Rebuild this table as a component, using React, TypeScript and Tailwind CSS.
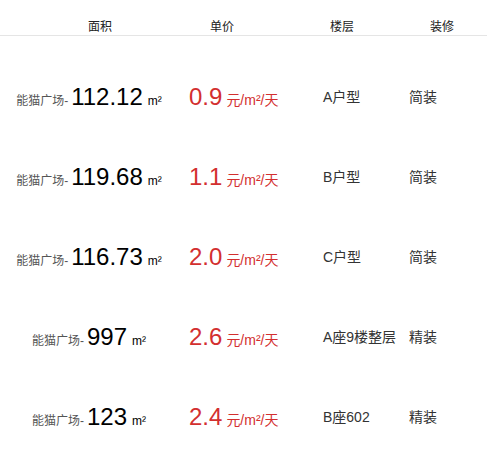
const rows = [
  { area: '112.12', price: '0.9', floor: 'A户型', deco: '简装' },
  { area: '119.68', price: '1.1', floor: 'B户型', deco: '简装' },
  { area: '116.73', price: '2.0', floor: 'C户型', deco: '简装' },
  { area: '997', price: '2.6', floor: 'A座9楼整层', deco: '精装' },
  { area: '123', price: '2.4', floor: 'B座602', deco: '精装' },
];

export default function App() {
  return (
    <div
      className="w-[487px] h-[451px] bg-white overflow-hidden text-[#333]"
      style={{ fontFamily: '"Liberation Sans", "Noto Sans CJK SC", sans-serif' }}
    >
      {/* Header */}
      <div className="h-9 pt-[19px] border-b border-[#e5e5e5] flex text-xs leading-4 text-[#222]">
        <span className="ml-[88px]">面积</span>
        <span className="ml-[98px]">单价</span>
        <span className="ml-[96px]">楼层</span>
        <span className="ml-[76px]">装修</span>
      </div>

      {/* Rows */}
      <div className="pt-[21px]">
        {rows.map(r => (
          <div key={r.area} className="h-20 flex items-center">
            <div className="w-[178px] flex items-baseline justify-center">
              <span className="text-xs text-[#555]">能猫广场-</span>
              <span className="ml-[3px] text-2xl leading-6 text-black">{r.area}</span>
              <span className="ml-[5px] text-xs text-black">m²</span>
            </div>
            <div className="w-[145px] pl-[11px] flex items-baseline text-[#d32f2f]">
              <span className="text-2xl leading-6">{r.price}</span>
              <span className="ml-1 text-sm">元/m²/天</span>
            </div>
            <div className="w-[86px] text-sm">{r.floor}</div>
            <div className="flex-1 text-sm">{r.deco}</div>
          </div>
        ))}
      </div>
    </div>
  );
}
